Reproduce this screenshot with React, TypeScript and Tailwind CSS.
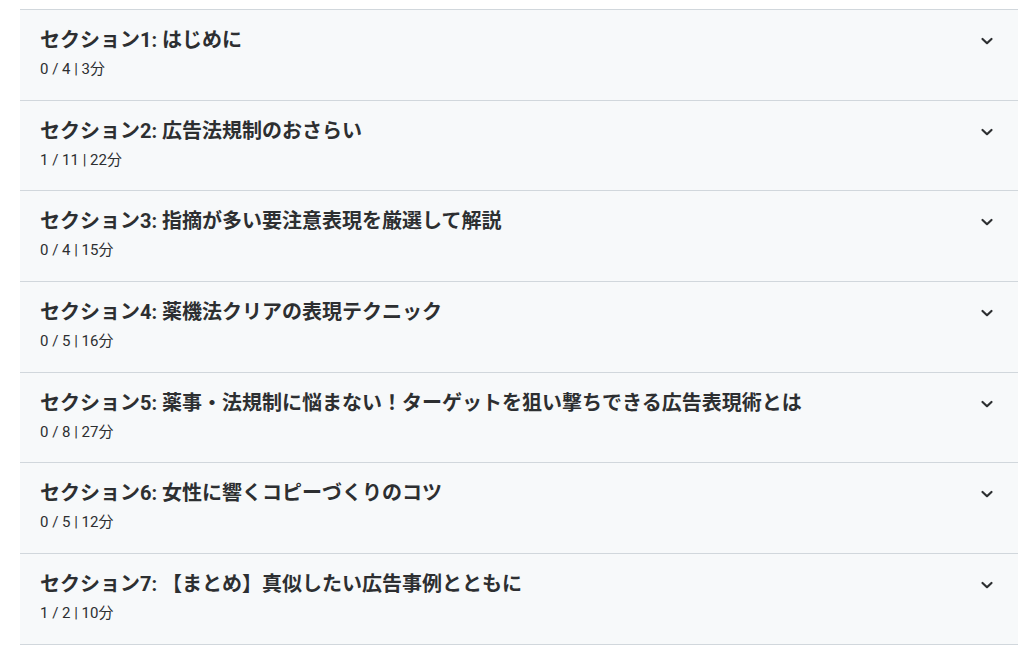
const sections = [
  { title: "セクション1: はじめに", meta: "0 / 4 | 3分" },
  { title: "セクション2: 広告法規制のおさらい", meta: "1 / 11 | 22分" },
  { title: "セクション3: 指摘が多い要注意表現を厳選して解説", meta: "0 / 4 | 15分" },
  { title: "セクション4: 薬機法クリアの表現テクニック", meta: "0 / 5 | 16分" },
  { title: "セクション5: 薬事・法規制に悩まない！ターゲットを狙い撃ちできる広告表現術とは", meta: "0 / 8 | 27分" },
  { title: "セクション6: 女性に響くコピーづくりのコツ", meta: "0 / 5 | 12分" },
  { title: "セクション7: 【まとめ】真似したい広告事例とともに", meta: "1 / 2 | 10分" },
];

function Chevron() {
  return (
    <svg width="14" height="14" viewBox="0 0 14 14" fill="none" className="text-[#2d2f31]">
      <path d="M2.5 5 L7 9.2 L11.5 5" stroke="currentColor" strokeWidth="2.2" strokeLinecap="round" strokeLinejoin="round" />
    </svg>
  );
}

export default function App() {
  return (
    <div className="min-h-screen bg-white px-[20px] pt-[9px] pr-[6px]" style={{ fontFamily: 'Roboto, "Noto Sans CJK JP", sans-serif' }}>
      <div className="border-t border-[#d1d7dc]">
        {sections.map((s) => (
          <div key={s.title} className="flex items-start justify-between border-b border-[#d1d7dc] bg-[#f7f9fa] pl-[20px] pr-[24px] pt-[18px] h-[90.7px]">
            <div className="flex flex-col">
              <h3 className="text-[20px] font-bold leading-[24px] text-[#2d2f31]">{s.title}</h3>
              <div className="mt-[7px] text-[15px] leading-[20px] text-[#2d2f31]">{s.meta}</div>
            </div>
            <div className="pt-[6px]">
              <Chevron />
            </div>
          </div>
        ))}
      </div>
    </div>
  );
}
